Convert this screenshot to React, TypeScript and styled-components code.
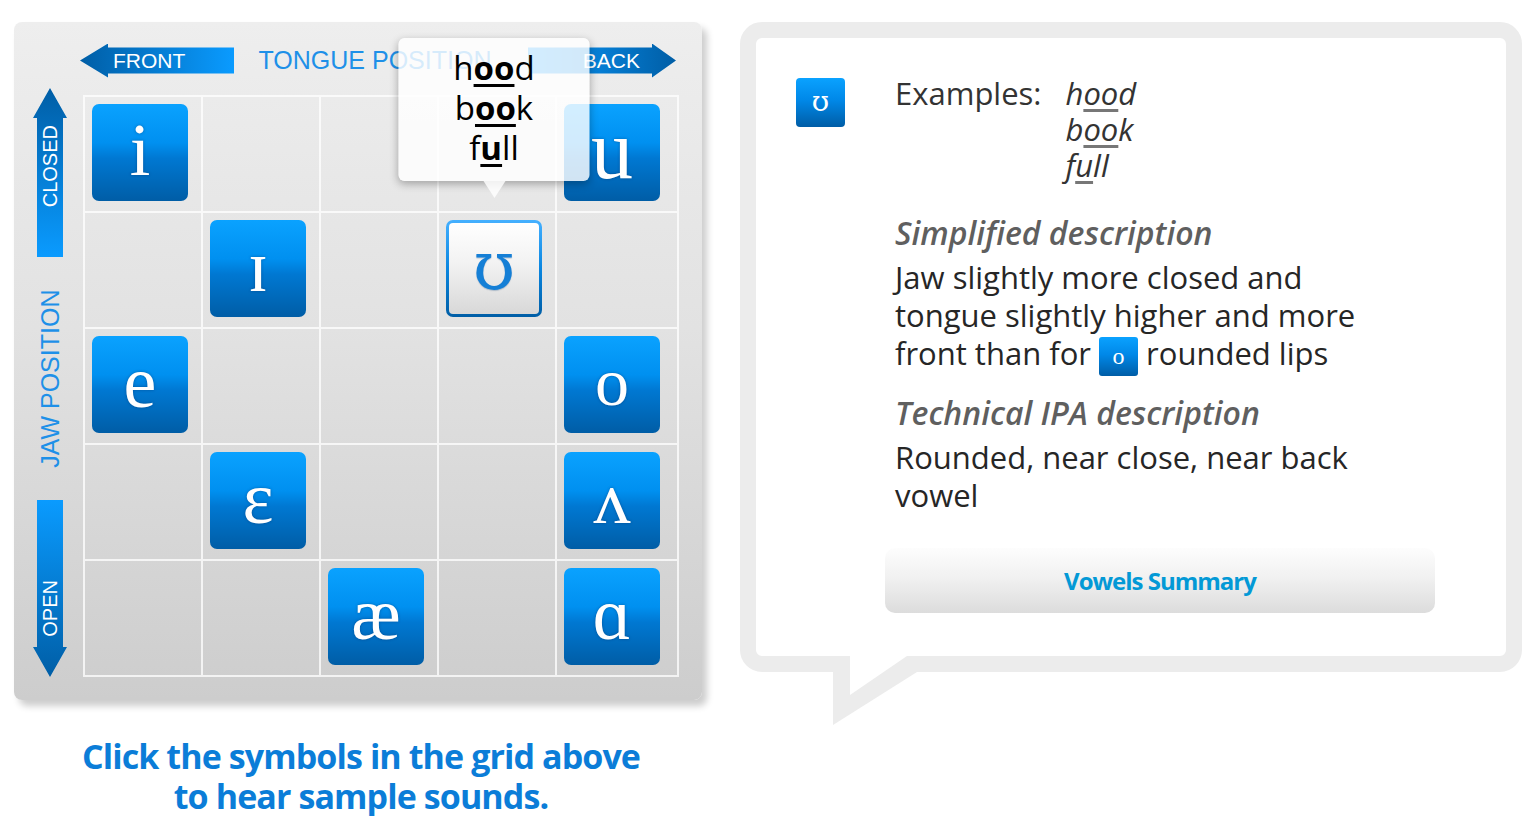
import React from "react";
import styled, { createGlobalStyle, css } from "styled-components";

const GlobalStyle = createGlobalStyle`
  body {
    margin: 0;
    background: #ffffff;
    font-family: "Open Sans", "Liberation Sans", sans-serif;
  }
`;

type Glyph = { ch: string; size?: number; alt?: boolean } | null;

const rows: Glyph[][] = [
  [{ ch: "i" }, null, null, null, { ch: "u", size: 84 }],
  [null, { ch: "ɪ" }, null, { ch: "ʊ", size: 68, alt: true }, null],
  [{ ch: "e" }, null, null, null, { ch: "o", size: 68 }],
  [null, { ch: "ɛ" }, null, null, { ch: "ʌ" }],
  [null, null, { ch: "æ" }, null, { ch: "ɑ" }],
];

const SELECTED = "ʊ";

const App: React.FC = () => {
  return (
    <>
      <GlobalStyle />
      <Page>
        <LeftColumn>
          <Panel>
            <AxisColumn>
              <VArrow $dir="up" $h={170}>
                <VLabel>CLOSED</VLabel>
              </VArrow>
              <AxisTitle>JAW POSITION</AxisTitle>
              <VArrow $dir="down" $h={178}>
                <VLabel>OPEN</VLabel>
              </VArrow>
            </AxisColumn>
            <MainColumn>
              <Header>
                <HArrow $dir="left" $w={154}>FRONT</HArrow>
                <HeaderTitle>TONGUE POSITION</HeaderTitle>
                <HArrow $dir="right" $w={148}>BACK</HArrow>
              </Header>
              <Grid>
                {rows.map((row, r) =>
                  row.map((g, c) => (
                    <Cell key={`${r}-${c}`}>
                      {g && g.ch === SELECTED && (
                        <Popup>
                          <PopupLine>
                            h<Mark>oo</Mark>d
                          </PopupLine>
                          <PopupLine>
                            b<Mark>oo</Mark>k
                          </PopupLine>
                          <PopupLine>
                            f<Mark>u</Mark>ll
                          </PopupLine>
                        </Popup>
                      )}
                      {g && (
                        <Tile $selected={g.ch === SELECTED} $size={g.size} $alt={g.alt}>
                          {g.ch}
                        </Tile>
                      )}
                    </Cell>
                  ))
                )}
              </Grid>
            </MainColumn>
          </Panel>
          <Caption>
            Click the symbols in the grid above
            <br />
            to hear sample sounds.
          </Caption>
        </LeftColumn>

        <Bubble>
          <BubbleInner>
            <SmallTile>ʊ</SmallTile>
            <Content>
              <ExamplesRow>
                <ExamplesLabel>Examples:</ExamplesLabel>
                <ExampleList>
                  <span>
                    h<Under>oo</Under>d
                  </span>
                  <span>
                    b<Under>oo</Under>k
                  </span>
                  <span>
                    f<Under>u</Under>ll
                  </span>
                </ExampleList>
              </ExamplesRow>
              <Heading $top={31}>Simplified description</Heading>
              <Body>
                Jaw slightly more closed and
                <br />
                tongue slightly higher and more
                <br />
                front than for <InlineTile>o</InlineTile> rounded lips
              </Body>
              <Heading $top={22}>Technical IPA description</Heading>
              <Body>
                Rounded, near close, near back
                <br />
                vowel
              </Body>
              <SummaryButton>Vowels Summary</SummaryButton>
            </Content>
          </BubbleInner>
          <Tail width="84" height="70" viewBox="0 0 84 70">
            <path d="M0 0 L0 69 L84 16 L84 0 Z" fill="#ececec" />
            <path d="M17 0 L17 39 L74 0 Z" fill="#ffffff" />
          </Tail>
        </Bubble>
      </Page>
    </>
  );
};

export default App;

// スタイル定義
const Page = styled.div`
  display: flex;
  align-items: flex-start;
  gap: 38px;
  padding: 22px 0 0 14px;
`;

const LeftColumn = styled.div`
  display: flex;
  flex-direction: column;
  width: 688px;
`;

const Panel = styled.div`
  display: flex;
  width: 688px;
  height: 678px;
  box-sizing: border-box;
  padding: 0 23px 23px 0;
  border-radius: 8px;
  background: linear-gradient(180deg, #eeeeee 0%, #e2e2e2 45%, #cdcdcd 100%);
  box-shadow: 5px 6px 7px rgba(0, 0, 0, 0.2);
`;

const AxisColumn = styled.div`
  width: 69px;
  flex-shrink: 0;
  display: flex;
  flex-direction: column;
  align-items: center;
  gap: 32px;
  padding: 66px 0 0 3px;
  box-sizing: border-box;
`;

const VArrow = styled.div<{ $dir: "up" | "down"; $h: number }>`
  width: 34px;
  height: ${(p) => p.$h}px;
  display: flex;
  flex-direction: column;
  align-items: center;
  color: #ffffff;
  ${(p) =>
    p.$dir === "up"
      ? css`
          justify-content: flex-start;
          padding-top: 37px;
          background: linear-gradient(180deg, #005ea6 0%, #0a9bff 100%);
          clip-path: polygon(50% 0, 100% 30px, 30px 30px, 30px 100%, 4px 100%, 4px 30px, 0 30px);
        `
      : css`
          justify-content: flex-end;
          padding-bottom: 40px;
          background: linear-gradient(180deg, #0a9bff 0%, #005ea6 100%);
          clip-path: polygon(4px 0, 30px 0, 30px calc(100% - 30px), 100% calc(100% - 30px), 50% 100%, 0 calc(100% - 30px), 4px calc(100% - 30px));
        `}
  box-sizing: border-box;
`;

const VLabel = styled.span`
  writing-mode: vertical-rl;
  transform: rotate(180deg);
  font-family: "Liberation Sans", Arial, sans-serif;
  font-size: 20px;
  line-height: 24px;
`;

const AxisTitle = styled.span`
  writing-mode: vertical-rl;
  transform: rotate(180deg);
  height: 180px;
  text-align: center;
  font-family: "Liberation Sans", Arial, sans-serif;
  font-size: 25px;
  color: #1e90e8;
`;

const MainColumn = styled.div`
  display: flex;
  flex-direction: column;
  width: 596px;
`;

const Header = styled.div`
  display: flex;
  align-items: center;
  justify-content: space-between;
  height: 73px;
  box-sizing: border-box;
  padding-top: 4px;
  margin: 0 3px 0 -3px;
`;

const HArrow = styled.div<{ $dir: "left" | "right"; $w: number }>`
  width: ${(p) => p.$w}px;
  height: 34px;
  display: flex;
  align-items: center;
  box-sizing: border-box;
  color: #ffffff;
  font-family: "Liberation Sans", Arial, sans-serif;
  font-size: 21px;
  ${(p) =>
    p.$dir === "left"
      ? css`
          padding-left: 33px;
          background: linear-gradient(90deg, #005ea6 0%, #0a9bff 100%);
          clip-path: polygon(0 50%, 28px 0, 28px 4px, 100% 4px, 100% 30px, 28px 30px, 28px 100%);
        `
      : css`
          justify-content: flex-end;
          padding-right: 36px;
          background: linear-gradient(90deg, #0a9bff 0%, #005ea6 100%);
          clip-path: polygon(100% 50%, calc(100% - 24px) 0, calc(100% - 24px) 4px, 0 4px, 0 30px, calc(100% - 24px) 30px, calc(100% - 24px) 100%);
        `}
`;

const HeaderTitle = styled.span`
  font-family: "Liberation Sans", Arial, sans-serif;
  font-size: 25px;
  color: #1e90e8;
  margin-right: 12px;
`;

const Grid = styled.div`
  display: grid;
  grid-template-columns: repeat(4, 118px) 1fr;
  grid-template-rows: repeat(5, 1fr);
  width: 596px;
  height: 582px;
  box-sizing: border-box;
  border-top: 2px solid rgba(255, 255, 255, 0.75);
  border-left: 2px solid rgba(255, 255, 255, 0.75);
`;

const Cell = styled.div`
  position: relative;
  display: flex;
  align-items: flex-start;
  justify-content: flex-start;
  padding: 7px 0 0 7px;
  border-right: 2px solid rgba(255, 255, 255, 0.75);
  border-bottom: 2px solid rgba(255, 255, 255, 0.75);
`;

const Tile = styled.div<{ $selected?: boolean; $size?: number; $alt?: boolean }>`
  width: 96px;
  height: 97px;
  box-sizing: border-box;
  border-radius: 7px;
  display: flex;
  align-items: center;
  justify-content: center;
  font-family: ${(p) =>
    p.$alt ? `"DejaVu Serif", "Liberation Serif", serif` : `"Liberation Serif", "DejaVu Serif", serif`};
  font-size: ${(p) => p.$size ?? 74}px;
  line-height: 1;
  padding-bottom: 6px;
  ${(p) =>
    p.$selected
      ? css`
          border: 3px solid transparent;
          background: linear-gradient(180deg, #ffffff 0%, #f2f2f2 45%, #d8d8d8 100%) padding-box,
            linear-gradient(180deg, #45b0ff 0%, #0a86e0 50%, #005ea6 100%) border-box;
          color: #157fd6;
          text-shadow: 0 1px 1px rgba(0, 60, 120, 0.25);
        `
      : css`
          background: linear-gradient(180deg, #0aa2ff 0%, #0090f0 40%, #0078d2 56%, #005da6 100%);
          color: #ffffff;
          text-shadow: 0 0 3px rgba(0, 40, 90, 0.45);
        `}
`;

const Popup = styled.div`
  position: absolute;
  z-index: 5;
  left: 55px;
  top: -175px;
  transform: translateX(-50%);
  width: 191px;
  height: 143px;
  box-sizing: border-box;
  padding-top: 10px;
  border-radius: 6px;
  background: rgba(255, 255, 255, 0.82);
  box-shadow: 0 3px 8px rgba(0, 0, 0, 0.3);
  display: flex;
  flex-direction: column;
  align-items: center;

  &::after {
    content: "";
    position: absolute;
    left: 50%;
    bottom: -17px;
    margin-left: -11px;
    border-left: 11px solid transparent;
    border-right: 11px solid transparent;
    border-top: 17px solid rgba(255, 255, 255, 0.82);
  }
`;

const PopupLine = styled.span`
  font-size: 33px;
  line-height: 40px;
  color: #000000;
`;

const Mark = styled.span`
  font-weight: 700;
  text-decoration: underline;
  text-decoration-thickness: 3px;
  text-underline-offset: 4px;
`;

const Caption = styled.div`
  margin-top: 36px;
  padding-left: 6px;
  text-align: center;
  font-size: 34px;
  font-weight: 700;
  letter-spacing: -0.9px;
  line-height: 40px;
  color: #0b7dd8;
`;

const Bubble = styled.div`
  position: relative;
  width: 782px;
  height: 650px;
  box-sizing: border-box;
  border: 16px solid #ececec;
  border-radius: 22px;
  background: #ffffff;
`;

const BubbleInner = styled.div`
  display: flex;
  gap: 50px;
  padding: 37px 0 0 40px;
`;

const Tail = styled.svg`
  position: absolute;
  left: 77px;
  top: 618px;
`;

const SmallTile = styled.div`
  flex-shrink: 0;
  width: 49px;
  height: 49px;
  margin-top: 3px;
  border-radius: 4px;
  display: flex;
  align-items: center;
  justify-content: center;
  background: linear-gradient(180deg, #0aa2ff 0%, #0088e8 45%, #005da6 100%);
  color: #ffffff;
  font-family: "DejaVu Serif", "Liberation Serif", serif;
  font-size: 28px;
  padding-bottom: 3px;
  box-sizing: border-box;
`;

const Content = styled.div`
  display: flex;
  flex-direction: column;
  color: #2a2a2a;
`;

const ExamplesRow = styled.div`
  display: flex;
  gap: 24px;
  font-size: 31px;
  line-height: 36px;
`;

const ExamplesLabel = styled.span`
  color: #333333;
`;

const ExampleList = styled.div`
  display: flex;
  flex-direction: column;
  font-style: italic;
  color: #333333;
`;

const Under = styled.span`
  text-decoration: underline;
  text-decoration-color: #777777;
  text-underline-offset: 4px;
`;

const Heading = styled.div<{ $top: number }>`
  margin-top: ${(p) => p.$top}px;
  font-size: 32px;
  line-height: 38px;
  font-style: italic;
  font-weight: 600;
  color: #5f5f5f;
`;

const Body = styled.div`
  margin-top: 6px;
  font-size: 31px;
  line-height: 38px;
  color: #262626;
`;

const InlineTile = styled.span`
  display: inline-flex;
  align-items: center;
  justify-content: center;
  width: 39px;
  height: 39px;
  vertical-align: 1px;
  margin-bottom: -12px;
  border-radius: 3px;
  background: linear-gradient(180deg, #0aa2ff 0%, #0088e8 45%, #005da6 100%);
  color: #ffffff;
  font-family: "Liberation Serif", "DejaVu Serif", serif;
  font-size: 24px;
  line-height: 1;
`;

const SummaryButton = styled.div`
  margin: 34px 0 0 -10px;
  width: 550px;
  height: 65px;
  border-radius: 10px;
  display: flex;
  align-items: center;
  justify-content: center;
  background: linear-gradient(180deg, #fdfdfd 0%, #f1f1f1 45%, #dcdcdc 100%);
  color: #0399d6;
  font-size: 24px;
  font-weight: 700;
  letter-spacing: -1px;
`;
